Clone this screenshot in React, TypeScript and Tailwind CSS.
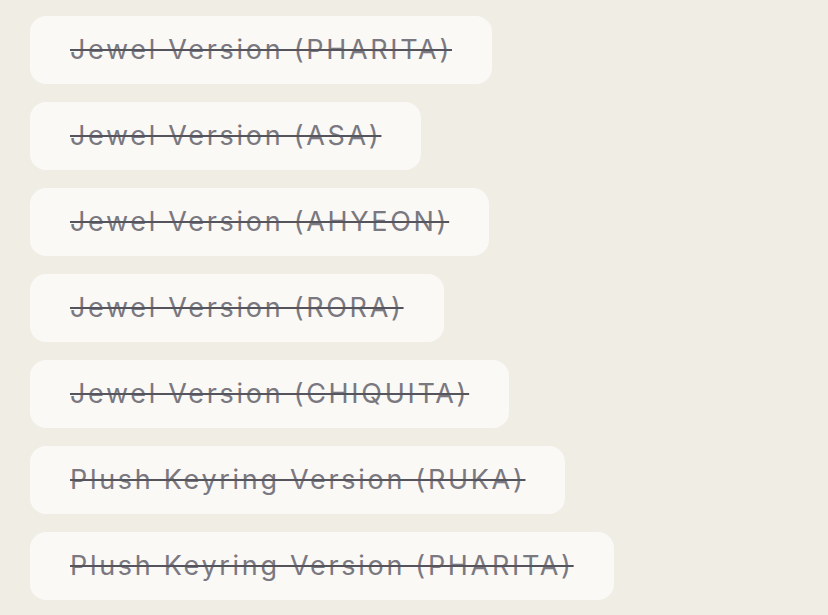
const items = [
  "Jewel Version (PHARITA)",
  "Jewel Version (ASA)",
  "Jewel Version (AHYEON)",
  "Jewel Version (RORA)",
  "Jewel Version (CHIQUITA)",
  "Plush Keyring Version (RUKA)",
  "Plush Keyring Version (PHARITA)",
];

export default function App() {
  return (
    <div className="min-h-screen bg-[#f0ede4] px-[30px] pt-[16px] font-['Inter',sans-serif]">
      <ul className="flex flex-col items-start gap-[18px]">
        {items.map((label) => (
          <li
            key={label}
            className="flex h-[68px] items-center rounded-[16px] bg-[#faf9f6] pl-[40px] pr-[40px]"
          >
            <span className="text-[27px] font-normal tracking-[0.1em] text-[#7a7880] line-through decoration-[#55535b] decoration-[1.5px]">
              {label}
            </span>
          </li>
        ))}
      </ul>
    </div>
  );
}
